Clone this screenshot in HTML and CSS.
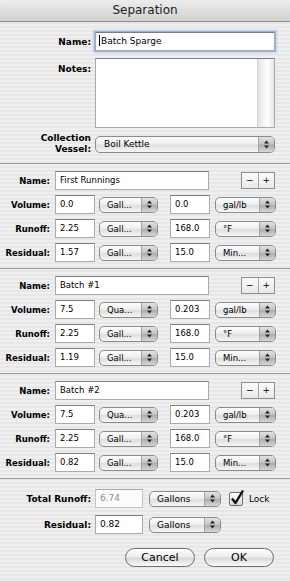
FILE: index.html
```html
<!DOCTYPE html>
<html lang="en">
<head>
  <meta charset="UTF-8">
  <title>Separation</title>
  <link rel="stylesheet" href="styles.css">
</head>
<body>
  <div class="window">
    <div class="titlebar">Separation</div>

    <div class="top">
      <div class="row">
        <span class="lbl">Name:</span>
        <div class="field wide focus"><span class="caret"></span>Batch Sparge</div>
      </div>
      <div class="row notes-row">
        <span class="lbl notes-lbl">Notes:</span>
        <div class="notes"><div class="scroll"></div></div>
      </div>
      <div class="row vessel-row">
        <span class="lbl two">Collection<br>Vessel:</span>
        <div class="pop wide"><span class="t">Boil Kettle</span><span class="a"><svg width="5" height="9" viewBox="0 0 5 9"><path d="M2.5 0.5L5 3.5H0z M2.5 8.5L0 5.5h5z" fill="#222"/></svg></span></div>
      </div>
    </div>

    <div class="group">
      <div class="row">
        <span class="lbl">Name:</span>
        <div class="field name">First Runnings</div>
        <div class="stepper"><span>&minus;</span><span>+</span></div>
      </div>
      <div class="row">
        <span class="lbl">Volume:</span>
        <div class="field num">0.0</div>
        <div class="pop unit"><span class="t">Gall...</span><span class="a"><svg width="5" height="9" viewBox="0 0 5 9"><path d="M2.5 0.5L5 3.5H0z M2.5 8.5L0 5.5h5z" fill="#222"/></svg></span></div>
        <div class="field num2">0.0</div>
        <div class="pop unit2"><span class="t">gal/lb</span><span class="a"><svg width="5" height="9" viewBox="0 0 5 9"><path d="M2.5 0.5L5 3.5H0z M2.5 8.5L0 5.5h5z" fill="#222"/></svg></span></div>
      </div>
      <div class="row">
        <span class="lbl">Runoff:</span>
        <div class="field num">2.25</div>
        <div class="pop unit"><span class="t">Gall...</span><span class="a"><svg width="5" height="9" viewBox="0 0 5 9"><path d="M2.5 0.5L5 3.5H0z M2.5 8.5L0 5.5h5z" fill="#222"/></svg></span></div>
        <div class="field num2">168.0</div>
        <div class="pop unit2"><span class="t">&deg;F</span><span class="a"><svg width="5" height="9" viewBox="0 0 5 9"><path d="M2.5 0.5L5 3.5H0z M2.5 8.5L0 5.5h5z" fill="#222"/></svg></span></div>
      </div>
      <div class="row">
        <span class="lbl">Residual:</span>
        <div class="field num">1.57</div>
        <div class="pop unit"><span class="t">Gall...</span><span class="a"><svg width="5" height="9" viewBox="0 0 5 9"><path d="M2.5 0.5L5 3.5H0z M2.5 8.5L0 5.5h5z" fill="#222"/></svg></span></div>
        <div class="field num2">15.0</div>
        <div class="pop unit2"><span class="t">Min...</span><span class="a"><svg width="5" height="9" viewBox="0 0 5 9"><path d="M2.5 0.5L5 3.5H0z M2.5 8.5L0 5.5h5z" fill="#222"/></svg></span></div>
      </div>
    </div>

    <div class="group">
      <div class="row">
        <span class="lbl">Name:</span>
        <div class="field name">Batch #1</div>
        <div class="stepper"><span>&minus;</span><span>+</span></div>
      </div>
      <div class="row">
        <span class="lbl">Volume:</span>
        <div class="field num">7.5</div>
        <div class="pop unit"><span class="t">Qua...</span><span class="a"><svg width="5" height="9" viewBox="0 0 5 9"><path d="M2.5 0.5L5 3.5H0z M2.5 8.5L0 5.5h5z" fill="#222"/></svg></span></div>
        <div class="field num2">0.203</div>
        <div class="pop unit2"><span class="t">gal/lb</span><span class="a"><svg width="5" height="9" viewBox="0 0 5 9"><path d="M2.5 0.5L5 3.5H0z M2.5 8.5L0 5.5h5z" fill="#222"/></svg></span></div>
      </div>
      <div class="row">
        <span class="lbl">Runoff:</span>
        <div class="field num">2.25</div>
        <div class="pop unit"><span class="t">Gall...</span><span class="a"><svg width="5" height="9" viewBox="0 0 5 9"><path d="M2.5 0.5L5 3.5H0z M2.5 8.5L0 5.5h5z" fill="#222"/></svg></span></div>
        <div class="field num2">168.0</div>
        <div class="pop unit2"><span class="t">&deg;F</span><span class="a"><svg width="5" height="9" viewBox="0 0 5 9"><path d="M2.5 0.5L5 3.5H0z M2.5 8.5L0 5.5h5z" fill="#222"/></svg></span></div>
      </div>
      <div class="row">
        <span class="lbl">Residual:</span>
        <div class="field num">1.19</div>
        <div class="pop unit"><span class="t">Gall...</span><span class="a"><svg width="5" height="9" viewBox="0 0 5 9"><path d="M2.5 0.5L5 3.5H0z M2.5 8.5L0 5.5h5z" fill="#222"/></svg></span></div>
        <div class="field num2">15.0</div>
        <div class="pop unit2"><span class="t">Min...</span><span class="a"><svg width="5" height="9" viewBox="0 0 5 9"><path d="M2.5 0.5L5 3.5H0z M2.5 8.5L0 5.5h5z" fill="#222"/></svg></span></div>
      </div>
    </div>

    <div class="group">
      <div class="row">
        <span class="lbl">Name:</span>
        <div class="field name">Batch #2</div>
        <div class="stepper"><span>&minus;</span><span>+</span></div>
      </div>
      <div class="row">
        <span class="lbl">Volume:</span>
        <div class="field num">7.5</div>
        <div class="pop unit"><span class="t">Qua...</span><span class="a"><svg width="5" height="9" viewBox="0 0 5 9"><path d="M2.5 0.5L5 3.5H0z M2.5 8.5L0 5.5h5z" fill="#222"/></svg></span></div>
        <div class="field num2">0.203</div>
        <div class="pop unit2"><span class="t">gal/lb</span><span class="a"><svg width="5" height="9" viewBox="0 0 5 9"><path d="M2.5 0.5L5 3.5H0z M2.5 8.5L0 5.5h5z" fill="#222"/></svg></span></div>
      </div>
      <div class="row">
        <span class="lbl">Runoff:</span>
        <div class="field num">2.25</div>
        <div class="pop unit"><span class="t">Gall...</span><span class="a"><svg width="5" height="9" viewBox="0 0 5 9"><path d="M2.5 0.5L5 3.5H0z M2.5 8.5L0 5.5h5z" fill="#222"/></svg></span></div>
        <div class="field num2">168.0</div>
        <div class="pop unit2"><span class="t">&deg;F</span><span class="a"><svg width="5" height="9" viewBox="0 0 5 9"><path d="M2.5 0.5L5 3.5H0z M2.5 8.5L0 5.5h5z" fill="#222"/></svg></span></div>
      </div>
      <div class="row">
        <span class="lbl">Residual:</span>
        <div class="field num">0.82</div>
        <div class="pop unit"><span class="t">Gall...</span><span class="a"><svg width="5" height="9" viewBox="0 0 5 9"><path d="M2.5 0.5L5 3.5H0z M2.5 8.5L0 5.5h5z" fill="#222"/></svg></span></div>
        <div class="field num2">15.0</div>
        <div class="pop unit2"><span class="t">Min...</span><span class="a"><svg width="5" height="9" viewBox="0 0 5 9"><path d="M2.5 0.5L5 3.5H0z M2.5 8.5L0 5.5h5z" fill="#222"/></svg></span></div>
      </div>
    </div>

    <div class="bottom">
      <div class="row">
        <span class="lbl">Total Runoff:</span>
        <div class="field total disabled">6.74</div>
        <div class="pop gal"><span class="t">Gallons</span><span class="a"><svg width="5" height="9" viewBox="0 0 5 9"><path d="M2.5 0.5L5 3.5H0z M2.5 8.5L0 5.5h5z" fill="#222"/></svg></span></div>
        <span class="check"><svg class="mark" width="16" height="17" viewBox="0 0 16 17"><path d="M3 9.5L6.5 14L14 1.5" fill="none" stroke="#111" stroke-width="2.4" stroke-linejoin="round"/></svg></span>
        <span class="lock">Lock</span>
      </div>
      <div class="row">
        <span class="lbl">Residual:</span>
        <div class="field total">0.82</div>
        <div class="pop gal"><span class="t">Gallons</span><span class="a"><svg width="5" height="9" viewBox="0 0 5 9"><path d="M2.5 0.5L5 3.5H0z M2.5 8.5L0 5.5h5z" fill="#222"/></svg></span></div>
      </div>
      <div class="buttons">
        <div class="btn">Cancel</div>
        <div class="btn">OK</div>
      </div>
    </div>
  </div>
</body>
</html>
```

FILE: styles.css
```css
body {
  margin: 0;
  font-family: "DejaVu Sans", sans-serif;
  color: #000;
}

/* fenetre avec fond rayé */
.window {
  width: 290px;
  height: 581px;
  overflow: hidden;
  background: repeating-linear-gradient(#efefef 0 2px, #e7e7e7 2px 4px);
}

.titlebar {
  height: 21px;
  line-height: 21px;
  text-align: center;
  font-size: 12px;
  color: #1c1c1c;
  border-bottom: 1px solid #8d8d8d;
  border-radius: 5px 5px 0 0;
  background: linear-gradient(#ececec, #d2d2d2);
}

.row {
  display: flex;
  align-items: center;
  height: 19px;
  white-space: nowrap;
}

.lbl {
  font-weight: bold;
  text-align: right;
}

/* champs texte */
.field {
  box-sizing: border-box;
  height: 19px;
  line-height: 17px;
  padding-left: 4px;
  background: #fff;
  border: 1px solid #ababab;
  border-top-color: #7e7e7e;
  overflow: hidden;
}

.field.disabled {
  color: #8c8c8c;
  background: #fbfbfb;
  border-color: #c4c4c4;
  border-top-color: #a8a8a8;
}

/* menus déroulants */
.pop {
  box-sizing: border-box;
  height: 16px;
  display: flex;
  border: 1px solid #8a8a8a;
  border-radius: 5px;
  overflow: hidden;
  background: linear-gradient(#fdfdfd, #efefef 45%, #dedede 55%, #f6f6f6);
}

.pop .t {
  flex: 1;
  padding-left: 7px;
  line-height: 14px;
  overflow: hidden;
}

.pop .a {
  width: 15px;
  display: flex;
  align-items: center;
  justify-content: center;
  border-left: 1px solid #a3a3a3;
  background: linear-gradient(#e2e2e2, #c3c3c3 48%, #acacac 52%, #d6d6d6);
}

/* partie haute */
.top {
  display: flex;
  flex-direction: column;
  padding: 10px 0 7px;
}

.top .lbl {
  width: 91px;
  font-size: 9px;
}

.top .field {
  font-size: 9px;
  margin-left: 4px;
}

.wide {
  width: 180px;
}

.focus {
  box-shadow: 0 0 0 1px #97b4da, 0 0 2px 2px #bcd0ea;
  padding-left: 3px;
}

.caret {
  display: inline-block;
  width: 1px;
  height: 11px;
  margin-right: 1px;
  vertical-align: -2px;
  background: #000;
}

.notes-row {
  height: auto;
  align-items: flex-start;
  margin-top: 7px;
}

.notes-lbl {
  padding-top: 6px;
}

.notes {
  box-sizing: border-box;
  width: 180px;
  height: 70px;
  margin-left: 4px;
  display: flex;
  justify-content: flex-end;
  background: #fff;
  border: 1px solid #a9a9a9;
  border-top-color: #7e7e7e;
}

.scroll {
  width: 16px;
  border-left: 1px solid #d2d2d2;
  background: linear-gradient(90deg, #e3e3e3, #f4f4f4 35%, #fdfdfd 60%, #e6e6e6);
}

.vessel-row {
  height: 24px;
  margin-top: 4px;
}

.top .pop {
  font-size: 9px;
  margin-left: 4px;
  height: 17px;
}

.top .pop .t {
  padding-left: 8px;
  line-height: 15px;
}

.two {
  line-height: 11px;
}

/* groupes de soutirage */
.group {
  display: flex;
  flex-direction: column;
  gap: 5px;
  padding: 7px 0 6px;
  font-size: 8.5px;
  border-top: 1px solid #9c9c9c;
}

.group .lbl {
  width: 50px;
}

.name {
  width: 154px;
  margin-left: 5px;
}

.num {
  width: 40px;
  margin-left: 5px;
}

.unit {
  width: 59px;
  margin-left: 4px;
}

.num2 {
  width: 40px;
  margin-left: 12px;
}

.unit2 {
  width: 61px;
  margin-left: 5px;
}

.stepper {
  box-sizing: border-box;
  width: 34px;
  height: 17px;
  margin-left: 32px;
  display: flex;
  border: 1px solid #8f8f8f;
  background: linear-gradient(#fbfbfb, #e8e8e8);
  font-size: 9px;
}

.stepper span {
  flex: 1;
  text-align: center;
  line-height: 15px;
}

.stepper span + span {
  border-left: 1px solid #a5a5a5;
}

/* bas de la fenetre */
.bottom {
  display: flex;
  flex-direction: column;
  padding-top: 10px;
  font-size: 9px;
  border-top: 1px solid #9c9c9c;
}

.bottom .row + .row {
  margin-top: 7px;
}

.bottom .lbl {
  width: 91px;
}

.total {
  width: 48px;
  margin-left: 4px;
}

.gal {
  width: 72px;
  margin-left: 6px;
}

.check {
  position: relative;
  box-sizing: border-box;
  width: 14px;
  height: 14px;
  margin-left: 8px;
  border: 1px solid #6f6f6f;
  border-radius: 2px;
  background: linear-gradient(#ffffff, #dcdcdc);
}

.check .mark {
  position: absolute;
  left: -1px;
  top: -4px;
}

.lock {
  margin-left: 6px;
}

.buttons {
  display: flex;
  justify-content: flex-end;
  gap: 9px;
  padding-right: 16px;
  margin-top: 14px;
}

.btn {
  box-sizing: border-box;
  width: 70px;
  height: 19px;
  line-height: 17px;
  text-align: center;
  font-size: 11px;
  border: 1px solid #6e6e6e;
  border-radius: 10px;
  background: linear-gradient(#ffffff, #ededed 45%, #d9d9d9 55%, #fafafa);
}
```
